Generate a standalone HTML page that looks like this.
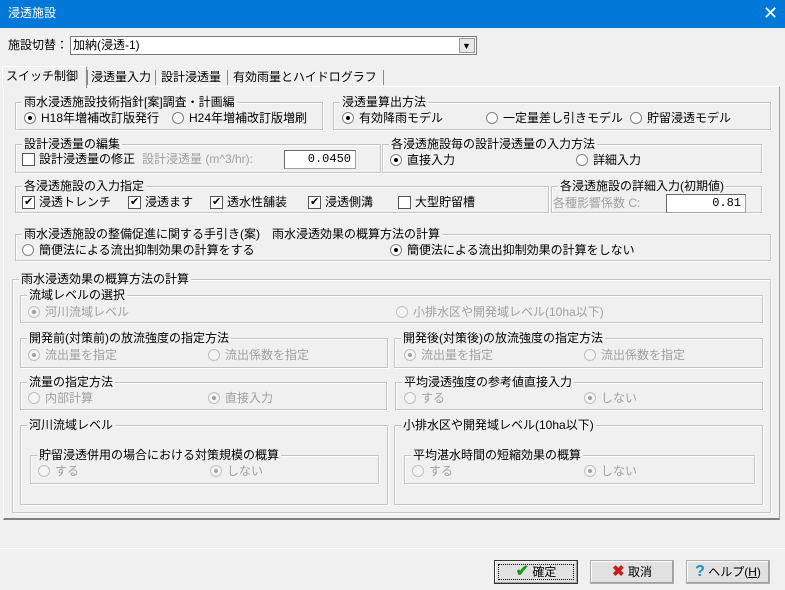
<!DOCTYPE html>
<html><head><meta charset="utf-8"><style>
*{box-sizing:border-box;margin:0;padding:0}
body{width:785px;height:590px;background:#f0f0f0;font-family:"Liberation Sans","Noto Sans CJK JP",sans-serif;font-size:12px;color:#000;position:relative;overflow:hidden}
.a{position:absolute;white-space:nowrap;line-height:14px}
.g{position:absolute;border:1px solid #c4c4c4;box-shadow:inset 1px 1px 0 #fff,1px 1px 0 #fff}
.lg{position:absolute;top:-8px;left:6px;background:#f0f0f0;padding:0 2px;line-height:14px;white-space:nowrap}
.r{position:absolute;white-space:nowrap;line-height:14px;padding-left:17px}
.r:before{content:"";position:absolute;left:0;top:1px;width:12px;height:12px;border-radius:50%;background:#fff;border:1px solid #808080;box-sizing:border-box}
.r.on:after{content:"";position:absolute;left:4px;top:5px;width:4px;height:4px;border-radius:50%;background:#000}
.d{color:#a0a0a0}.d:before{border-color:#c0c0c0;background:#f4f4f4}.d.on:after{background:#a0a0a0}
.c{position:absolute;white-space:nowrap;line-height:14px;padding-left:17px}
.c:before{content:"";position:absolute;left:0;top:1px;width:13px;height:13px;background:#fff;border:1px solid #555;box-sizing:border-box}
.c.on:after{content:"✔";position:absolute;left:2px;top:0;font-size:11px;line-height:14px}
.in{position:absolute;background:#fff;border:1px solid #a0a0a0;border-top-color:#696969;border-left-color:#696969;text-align:right;padding-right:4px;line-height:16px;font-family:"Liberation Mono",monospace;font-size:12px}
.btn{position:absolute;width:84px;height:24px;border:1px solid #adadad;background:#e1e1e1;text-align:center;line-height:22px;box-shadow:inset -1px -1px 0 #a0a0a0,inset 1px 1px 0 #fff}
</style></head><body>
<div style="position:absolute;left:0;top:0;width:785px;height:28px;background:#0078d7"></div>
<div class="a" style="left:8px;top:6px;color:#fff;font-size:12px">浸透施設</div>
<div class="a" style="left:763px;top:3px;color:#fff;font-size:18px;line-height:20px">✕</div>

<div class="a" style="left:8px;top:38px">施設切替：</div>
<div style="position:absolute;left:70px;top:36px;width:407px;height:19px;background:#fff;border:1px solid #7a7a7a"></div>
<div class="a" style="left:73px;top:38px">加納(浸透-1)</div>
<div style="position:absolute;left:459px;top:38px;width:16px;height:15px;background:#e8e8e8;border:1px solid #999"></div>
<div class="a" style="left:462px;top:39px;font-size:9px">▼</div>

<!-- tabs -->
<div style="position:absolute;left:3px;top:86px;width:777px;height:434px;border:1px solid #fff;border-right-color:#a0a0a0;border-bottom:2px solid #808080"></div>
<div style="position:absolute;left:2px;top:66px;width:85px;height:22px;background:#f0f0f0;border:1px solid #fff;border-bottom:none;border-right-color:#888"></div>
<div class="a" style="left:6px;top:69px">スイッチ制御</div>
<div style="position:absolute;left:87px;top:70px;width:1px;height:15px;background:#888"></div>
<div class="a" style="left:91px;top:70px">浸透量入力</div>
<div style="position:absolute;left:155px;top:70px;width:1px;height:15px;background:#888"></div>
<div class="a" style="left:161px;top:70px">設計浸透量</div>
<div style="position:absolute;left:227px;top:70px;width:1px;height:15px;background:#888"></div>
<div class="a" style="left:233px;top:70px">有効雨量とハイドログラフ</div>
<div style="position:absolute;left:383px;top:70px;width:1px;height:15px;background:#888"></div>

<div class="g" style="left:15px;top:102px;width:308px;height:28px"><span class="lg">雨水浸透施設技術指針[案]調査・計画編</span></div>
<div class="r on" style="left:24px;top:111px">H18年増補改訂版発行</div>
<div class="r" style="left:172px;top:111px">H24年増補改訂版増刷</div>
<div class="g" style="left:333px;top:102px;width:438px;height:28px"><span class="lg">浸透量算出方法</span></div>
<div class="r on" style="left:342px;top:111px">有効降雨モデル</div>
<div class="r" style="left:486px;top:111px">一定量差し引きモデル</div>
<div class="r" style="left:630px;top:111px">貯留浸透モデル</div>

<div class="g" style="left:15px;top:144px;width:366px;height:29px"><span class="lg">設計浸透量の編集</span></div>
<div class="c" style="left:22px;top:152px">設計浸透量の修正</div>
<div class="a" style="left:142px;top:152px;color:#a0a0a0">設計浸透量 (m^3/hr):</div>
<div class="in" style="left:284px;top:150px;width:72px;height:19px">0.0450</div>
<div class="g" style="left:382px;top:144px;width:380px;height:29px"><span class="lg">各浸透施設毎の設計浸透量の入力方法</span></div>
<div class="r on" style="left:390px;top:153px">直接入力</div>
<div class="r" style="left:576px;top:153px">詳細入力</div>

<div class="g" style="left:15px;top:186px;width:534px;height:27px"><span class="lg">各浸透施設の入力指定</span></div>
<div class="c on" style="left:22px;top:195px">浸透トレンチ</div>
<div class="c on" style="left:128px;top:195px">浸透ます</div>
<div class="c on" style="left:210px;top:195px">透水性舗装</div>
<div class="c on" style="left:308px;top:195px">浸透側溝</div>
<div class="c" style="left:398px;top:195px">大型貯留槽</div>
<div class="g" style="left:551px;top:186px;width:211px;height:27px"><span class="lg">各浸透施設の詳細入力(初期値)</span></div>
<div class="a" style="left:553px;top:196px;color:#a0a0a0">各種影響係数 C:</div>
<div class="in" style="left:666px;top:194px;width:80px;height:19px">0.81</div>

<div class="g" style="left:15px;top:234px;width:756px;height:27px"><span class="lg">雨水浸透施設の整備促進に関する手引き(案)　雨水浸透効果の概算方法の計算</span></div>
<div class="r" style="left:22px;top:243px">簡便法による流出抑制効果の計算をする</div>
<div class="r on" style="left:390px;top:243px">簡便法による流出抑制効果の計算をしない</div>

<div class="g" style="left:12px;top:279px;width:759px;height:234px"><span class="lg">雨水浸透効果の概算方法の計算</span></div>
<div class="g" style="left:20px;top:295px;width:743px;height:28px"><span class="lg">流域レベルの選択</span></div>
<div class="r d on" style="left:28px;top:305px">河川流域レベル</div>
<div class="r d" style="left:396px;top:305px">小排水区や開発域レベル(10ha以下)</div>

<div class="g" style="left:20px;top:338px;width:368px;height:30px"><span class="lg">開発前(対策前)の放流強度の指定方法</span></div>
<div class="r d on" style="left:28px;top:348px">流出量を指定</div>
<div class="r d" style="left:208px;top:348px">流出係数を指定</div>
<div class="g" style="left:394px;top:338px;width:369px;height:30px"><span class="lg">開発後(対策後)の放流強度の指定方法</span></div>
<div class="r d on" style="left:404px;top:348px">流出量を指定</div>
<div class="r d" style="left:584px;top:348px">流出係数を指定</div>

<div class="g" style="left:20px;top:382px;width:367px;height:28px"><span class="lg">流量の指定方法</span></div>
<div class="r d" style="left:28px;top:391px">内部計算</div>
<div class="r d on" style="left:208px;top:391px">直接入力</div>
<div class="g" style="left:395px;top:382px;width:368px;height:28px"><span class="lg">平均浸透強度の参考値直接入力</span></div>
<div class="r d" style="left:404px;top:391px">する</div>
<div class="r d on" style="left:584px;top:391px">しない</div>

<div class="g" style="left:20px;top:425px;width:368px;height:80px"><span class="lg">河川流域レベル</span></div>
<div class="g" style="left:30px;top:455px;width:349px;height:29px"><span class="lg">貯留浸透併用の場合における対策規模の概算</span></div>
<div class="r d" style="left:38px;top:464px">する</div>
<div class="r d on" style="left:210px;top:464px">しない</div>
<div class="g" style="left:394px;top:425px;width:369px;height:80px"><span class="lg">小排水区や開発域レベル(10ha以下)</span></div>
<div class="g" style="left:404px;top:455px;width:351px;height:29px"><span class="lg">平均湛水時間の短縮効果の概算</span></div>
<div class="r d" style="left:412px;top:464px">する</div>
<div class="r d on" style="left:584px;top:464px">しない</div>

<div style="position:absolute;left:0;top:548px;width:785px;height:1px;background:#fff"></div>
<div class="btn" style="left:494px;top:560px;border-color:#333"><div style="position:absolute;left:3px;top:3px;right:3px;bottom:3px;border:1px dotted #000"></div><span style="color:#1a9a1a;font-size:16px;font-weight:bold">✔</span> 確定</div>
<div class="btn" style="left:590px;top:560px"><span style="color:#c81e1e;font-size:15px;font-weight:bold">✖</span> 取消</div>
<div class="btn" style="left:686px;top:560px"><span style="color:#1a8fc8;font-size:16px;font-weight:bold">?</span> ヘルプ(<u>H</u>)</div>
</body></html>
